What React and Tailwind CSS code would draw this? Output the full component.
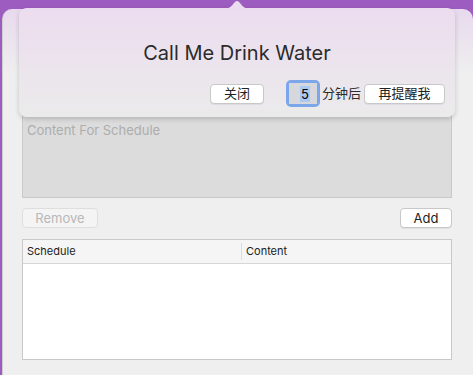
const sans = { fontFamily: '"Inter", "Noto Sans CJK SC", sans-serif' };

function MacButton({ children, disabled, className = "" }) {
  return (
    <button
      type="button"
      className={`h-[20px] rounded-[4px] border text-[13px] leading-none flex items-center justify-center ${
        disabled
          ? "border-[#dedede] bg-[#f4f4f4] text-[#b8b8b8]"
          : "border-[#c8c8c8] bg-white text-[#222] shadow-[0_1px_0_rgba(0,0,0,0.06)]"
      } ${className}`}
    >
      {children}
    </button>
  );
}

function Popover() {
  return (
    <div className="absolute left-[19px] top-[8px] w-[436px] h-[109px]">
      <svg className="absolute left-[203px] -top-[8px]" width="30" height="9" viewBox="0 0 30 9">
        <path d="M0 9 C7 9 10 6 12 3 Q15 -1 18 3 C20 6 23 9 30 9 Z" fill="#ecdcef" />
      </svg>
      <div className="w-full h-full rounded-[8px] bg-gradient-to-b from-[#ecdcef] to-[#ebebeb] shadow-[0_2px_5px_rgba(0,0,0,0.18)] flex flex-col items-center">
        <div className="mt-[33px] text-[20px] leading-[24px] text-[#2b2b2b]">Call Me Drink Water</div>
        <div className="mt-[15px] w-full flex items-center">
          <MacButton className="ml-[191px] w-[54px]">关闭</MacButton>
          <div className="ml-[22px] w-[34px] h-[27px] rounded-[5px] bg-[#7ba6ea] p-[3px]">
            <div className="w-full h-full bg-[#d6d8de] flex items-center justify-end pr-[7px]">
              <span className="bg-[#aac9f2] text-[13px] leading-[16px] text-black px-[1px]">5</span>
            </div>
          </div>
          <span className="ml-[2px] text-[13px] text-[#2b2b2b]">分钟后</span>
          <MacButton className="ml-[3px] w-[81px]">再提醒我</MacButton>
        </div>
      </div>
    </div>
  );
}

export default function App() {
  return (
    <div className="relative w-[473px] h-[375px] overflow-hidden bg-[#9d5cbf]" style={sans}>
      <div className="ml-[2px] mt-[9px] h-[366px] rounded-t-[10px] border-l border-[#cfcfcf] bg-gradient-to-b from-[#e8d9ee] via-[#efefef] via-[18%] to-[#efefef]">
        <div className="pl-[19px] pr-[21px] pt-[50px] flex flex-col">
          <div className="h-[139px] border border-[#c9c9c9] bg-[#dcdcdc] px-[4px]">
            <div className="h-[57px]" />
            <span className="text-[13px] text-[#adadad]">Content For Schedule</span>
          </div>
          <div className="mt-[10px] flex justify-between items-center">
            <MacButton disabled className="w-[76px]">Remove</MacButton>
            <MacButton className="w-[52px]">Add</MacButton>
          </div>
          <div className="mt-[11px] h-[121px] border border-[#c8c8c8] bg-white flex flex-col">
            <div className="h-[24px] flex bg-[#f5f5f5] border-b border-[#d6d6d6] text-[11px] text-[#222]">
              <div className="w-[219px] pl-[4px] flex items-center border-r border-[#dcdcdc] my-[3px]">Schedule</div>
              <div className="flex-1 pl-[4px] flex items-center">Content</div>
            </div>
          </div>
        </div>
      </div>
      <Popover />
    </div>
  );
}
